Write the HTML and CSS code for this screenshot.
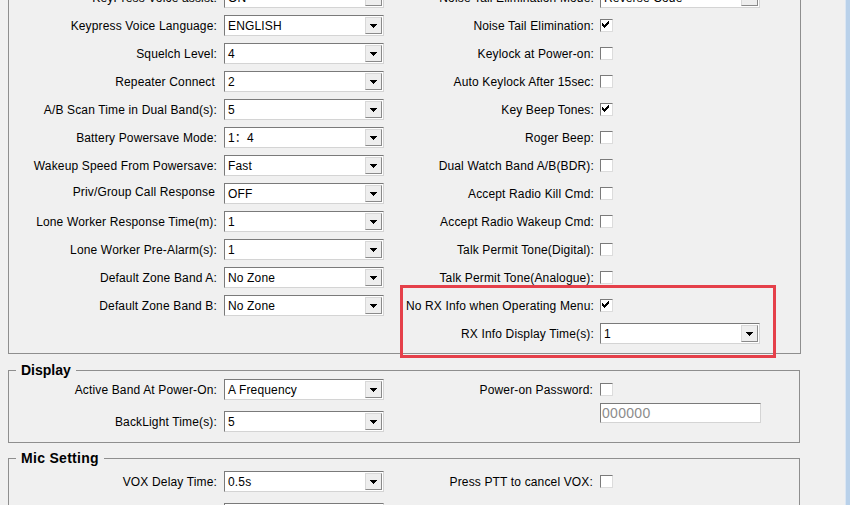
FILE: index.html
```html
<!DOCTYPE html>
<html lang="en">
<head>
<meta charset="utf-8">
<title>Optional Setting</title>
<link rel="stylesheet" href="styles.css">
</head>
<body>
<div class="screen">
  <div class="main">
    <section class="group group-top">
      <div class="cols">
        <div class="form col-left">
          <span class="lbl">KeyPress Voice assist:</span>
          <div class="combo"><span class="val">ON</span><span class="btn"><svg width="7" height="4" viewBox="0 0 7 4"><path d="M0 0h7v1H0zM1 1h5v1H1zM2 2h3v1H2zM3 3h1v1H3z"/></svg></span></div>
          <span class="lbl">Keypress Voice Language:</span>
          <div class="combo"><span class="val">ENGLISH</span><span class="btn"><svg width="7" height="4" viewBox="0 0 7 4"><path d="M0 0h7v1H0zM1 1h5v1H1zM2 2h3v1H2zM3 3h1v1H3z"/></svg></span></div>
          <span class="lbl">Squelch Level:</span>
          <div class="combo"><span class="val">4</span><span class="btn"><svg width="7" height="4" viewBox="0 0 7 4"><path d="M0 0h7v1H0zM1 1h5v1H1zM2 2h3v1H2zM3 3h1v1H3z"/></svg></span></div>
          <span class="lbl lbl-nocolon">Repeater Connect</span>
          <div class="combo"><span class="val">2</span><span class="btn"><svg width="7" height="4" viewBox="0 0 7 4"><path d="M0 0h7v1H0zM1 1h5v1H1zM2 2h3v1H2zM3 3h1v1H3z"/></svg></span></div>
          <span class="lbl">A/B Scan Time in Dual Band(s):</span>
          <div class="combo"><span class="val">5</span><span class="btn"><svg width="7" height="4" viewBox="0 0 7 4"><path d="M0 0h7v1H0zM1 1h5v1H1zM2 2h3v1H2zM3 3h1v1H3z"/></svg></span></div>
          <span class="lbl">Battery Powersave Mode:</span>
          <div class="combo"><span class="val">1：4</span><span class="btn"><svg width="7" height="4" viewBox="0 0 7 4"><path d="M0 0h7v1H0zM1 1h5v1H1zM2 2h3v1H2zM3 3h1v1H3z"/></svg></span></div>
          <span class="lbl">Wakeup Speed From Powersave:</span>
          <div class="combo"><span class="val">Fast</span><span class="btn"><svg width="7" height="4" viewBox="0 0 7 4"><path d="M0 0h7v1H0zM1 1h5v1H1zM2 2h3v1H2zM3 3h1v1H3z"/></svg></span></div>
          <span class="lbl lbl-nocolon lbl-raised">Priv/Group Call Response</span>
          <div class="combo"><span class="val">OFF</span><span class="btn"><svg width="7" height="4" viewBox="0 0 7 4"><path d="M0 0h7v1H0zM1 1h5v1H1zM2 2h3v1H2zM3 3h1v1H3z"/></svg></span></div>
          <span class="lbl">Lone Worker Response Time(m):</span>
          <div class="combo"><span class="val">1</span><span class="btn"><svg width="7" height="4" viewBox="0 0 7 4"><path d="M0 0h7v1H0zM1 1h5v1H1zM2 2h3v1H2zM3 3h1v1H3z"/></svg></span></div>
          <span class="lbl">Lone Worker Pre-Alarm(s):</span>
          <div class="combo"><span class="val">1</span><span class="btn"><svg width="7" height="4" viewBox="0 0 7 4"><path d="M0 0h7v1H0zM1 1h5v1H1zM2 2h3v1H2zM3 3h1v1H3z"/></svg></span></div>
          <span class="lbl">Default Zone Band A:</span>
          <div class="combo"><span class="val">No Zone</span><span class="btn"><svg width="7" height="4" viewBox="0 0 7 4"><path d="M0 0h7v1H0zM1 1h5v1H1zM2 2h3v1H2zM3 3h1v1H3z"/></svg></span></div>
          <span class="lbl">Default Zone Band B:</span>
          <div class="combo"><span class="val">No Zone</span><span class="btn"><svg width="7" height="4" viewBox="0 0 7 4"><path d="M0 0h7v1H0zM1 1h5v1H1zM2 2h3v1H2zM3 3h1v1H3z"/></svg></span></div>
        </div>
        <div class="form col-right">
          <span class="lbl">Noise Tail Elimination Mode:</span>
          <div class="combo"><span class="val">Reverse Code</span><span class="btn"><svg width="7" height="4" viewBox="0 0 7 4"><path d="M0 0h7v1H0zM1 1h5v1H1zM2 2h3v1H2zM3 3h1v1H3z"/></svg></span></div>
          <span class="lbl">Noise Tail Elimination:</span>
          <span class="chk"><svg width="11" height="11" viewBox="0 0 11 11" shape-rendering="crispEdges"><path d="M8 2h1v1H8zM7 3h2v1H7zM2 4h1v1H2zM6 4h3v1H6zM2 5h2v1H2zM5 5h3v1H5zM2 6h5v1H2zM3 7h3v1H3zM4 8h1v1H4z"/></svg></span>
          <span class="lbl">Keylock at Power-on:</span>
          <span class="chk"></span>
          <span class="lbl">Auto Keylock After 15sec:</span>
          <span class="chk"></span>
          <span class="lbl">Key Beep Tones:</span>
          <span class="chk"><svg width="11" height="11" viewBox="0 0 11 11" shape-rendering="crispEdges"><path d="M8 2h1v1H8zM7 3h2v1H7zM2 4h1v1H2zM6 4h3v1H6zM2 5h2v1H2zM5 5h3v1H5zM2 6h5v1H2zM3 7h3v1H3zM4 8h1v1H4z"/></svg></span>
          <span class="lbl">Roger Beep:</span>
          <span class="chk"></span>
          <span class="lbl">Dual Watch Band A/B(BDR):</span>
          <span class="chk"></span>
          <span class="lbl">Accept Radio Kill Cmd:</span>
          <span class="chk"></span>
          <span class="lbl">Accept Radio Wakeup Cmd:</span>
          <span class="chk"></span>
          <span class="lbl">Talk Permit Tone(Digital):</span>
          <span class="chk"></span>
          <span class="lbl">Talk Permit Tone(Analogue):</span>
          <span class="chk"></span>
          <span class="lbl">No RX Info when Operating Menu:</span>
          <span class="chk"><svg width="11" height="11" viewBox="0 0 11 11" shape-rendering="crispEdges"><path d="M8 2h1v1H8zM7 3h2v1H7zM2 4h1v1H2zM6 4h3v1H6zM2 5h2v1H2zM5 5h3v1H5zM2 6h5v1H2zM3 7h3v1H3zM4 8h1v1H4z"/></svg></span>
          <span class="lbl">RX Info Display Time(s):</span>
          <div class="combo"><span class="val">1</span><span class="btn"><svg width="7" height="4" viewBox="0 0 7 4"><path d="M0 0h7v1H0zM1 1h5v1H1zM2 2h3v1H2zM3 3h1v1H3z"/></svg></span></div>
        </div>
      </div>
    </section>

    <section class="group group-display">
      <h2 class="group-title">Display</h2>
      <div class="cols">
        <div class="form col-left rows-spaced">
          <span class="lbl">Active Band At Power-On:</span>
          <div class="combo"><span class="val">A Frequency</span><span class="btn"><svg width="7" height="4" viewBox="0 0 7 4"><path d="M0 0h7v1H0zM1 1h5v1H1zM2 2h3v1H2zM3 3h1v1H3z"/></svg></span></div>
          <span class="lbl">BackLight Time(s):</span>
          <div class="combo"><span class="val">5</span><span class="btn"><svg width="7" height="4" viewBox="0 0 7 4"><path d="M0 0h7v1H0zM1 1h5v1H1zM2 2h3v1H2zM3 3h1v1H3z"/></svg></span></div>
        </div>
        <div class="stack">
          <div class="form col-right rows-spaced">
            <span class="lbl lbl-tight">Power-on Password:</span>
            <span class="chk"></span>
          </div>
          <div class="textbox">000000</div>
        </div>
      </div>
    </section>

    <section class="group group-mic">
      <h2 class="group-title title-wide">Mic Setting</h2>
      <div class="cols">
        <div class="form col-left rows-spaced">
          <span class="lbl">VOX Delay Time:</span>
          <div class="combo"><span class="val">0.5s</span><span class="btn"><svg width="7" height="4" viewBox="0 0 7 4"><path d="M0 0h7v1H0zM1 1h5v1H1zM2 2h3v1H2zM3 3h1v1H3z"/></svg></span></div>
          <span class="lbl"></span>
          <div class="combo"><span class="val"></span><span class="btn"><svg width="7" height="4" viewBox="0 0 7 4"><path d="M0 0h7v1H0zM1 1h5v1H1zM2 2h3v1H2zM3 3h1v1H3z"/></svg></span></div>
        </div>
        <div class="form col-right rows-spaced">
          <span class="lbl lbl-tight">Press PTT to cancel VOX:</span>
          <span class="chk"></span>
        </div>
      </div>
    </section>

    <div class="highlight"></div>
  </div>
  <div class="edge"></div>
</div>
</body>
</html>
```

FILE: styles.css
```css
* { box-sizing: border-box; }

html, body {
  margin: 0;
  padding: 0;
  background: #f0f0f0;
}

body {
  font-family: "Liberation Sans", Arial, "Noto Sans CJK SC", sans-serif;
  font-size: 12px;
  color: #000;
}

.screen {
  display: flex;
  width: 850px;
  height: 505px;
  overflow: hidden;
}

.main {
  position: relative;
  width: 845px;
  flex: none;
  background: #f0f0f0;
}

.edge {
  width: 5px;
  flex: none;
  background: #b9d1ea;
  border-left: 1px solid #dbe6f3;
}

.group {
  border: 1px solid #8e8e8e;
  margin: 0 0 0 8px;
  width: 792px;
}

.group-top {
  margin-top: -30px;
  width: 793px;
  padding: 12px 0 6px 0;
}

.group-display {
  margin-top: 16px;
  padding: 0 0 10px 0;
}

.group-mic {
  margin-top: 15px;
  padding: 0 0 10px 0;
}

.group-mic .cols {
  padding-top: 4px;
}

.group-title {
  margin: -9px 0 0 7px;
  padding: 0 5px;
  width: fit-content;
  height: 16px;
  line-height: 16px;
  font-size: 14px;
  font-weight: bold;
  background: #f0f0f0;
}

.title-wide {
  letter-spacing: 0.3px;
}

.cols {
  display: flex;
  align-items: flex-start;
}

.form {
  display: grid;
  grid-auto-rows: 28px;
  align-items: center;
}

.col-left {
  width: 375px;
  grid-template-columns: 208px 160px;
  column-gap: 7px;
}

.col-right {
  width: 376px;
  grid-template-columns: 210px 160px;
  column-gap: 6px;
}

.rows-spaced {
  grid-auto-rows: 22px;
  row-gap: 10px;
}

.lbl {
  text-align: right;
  white-space: nowrap;
  line-height: 14px;
  padding-top: 2px;
  letter-spacing: 0.15px;
}

.lbl-nocolon {
  padding-right: 2px;
}

.lbl-raised {
  position: relative;
  top: -2px;
}

.lbl-tight {
  padding-right: 1px;
}

.combo {
  width: 160px;
  height: 21px;
  display: flex;
  align-items: center;
  padding: 1px;
  background: #fff;
  border: 1px solid;
  border-color: #7a7a7a #d4d4d4 #d4d4d4 #7a7a7a;
}

.val {
  flex: 1;
  padding-left: 2px;
  padding-top: 2px;
  line-height: 14px;
  white-space: nowrap;
  overflow: hidden;
  letter-spacing: 0.15px;
}

.btn {
  width: 17px;
  height: 17px;
  flex: none;
  display: flex;
  align-items: center;
  justify-content: center;
  background: #eeeeee;
  border: 1px solid;
  border-color: #d8d8d8 #8a8a8a #8a8a8a #d8d8d8;
}

.btn svg {
  display: block;
  fill: #000;
  margin-top: 1px;
}

.chk {
  width: 13px;
  height: 13px;
  display: block;
  background: #fff;
  border: 1px solid;
  border-color: #7a7a7a #dcdcdc #dcdcdc #7a7a7a;
}

.chk svg {
  display: block;
  fill: #000;
  margin: -1px 0 0 -1px;
}

.stack {
  display: flex;
  flex-direction: column;
}

.textbox {
  margin: 3px 0 0 216px;
  width: 161px;
  height: 20px;
  padding-left: 1px;
  font-size: 14px;
  line-height: 18px;
  color: #8c8c8c;
  background: #fff;
  border: 1px solid;
  border-color: #7a7a7a #d4d4d4 #d4d4d4 #7a7a7a;
  letter-spacing: 0.3px;
}

.highlight {
  position: absolute;
  left: 400px;
  top: 285px;
  width: 376px;
  height: 73px;
  border: 3px solid #e5404a;
  pointer-events: none;
}
```
